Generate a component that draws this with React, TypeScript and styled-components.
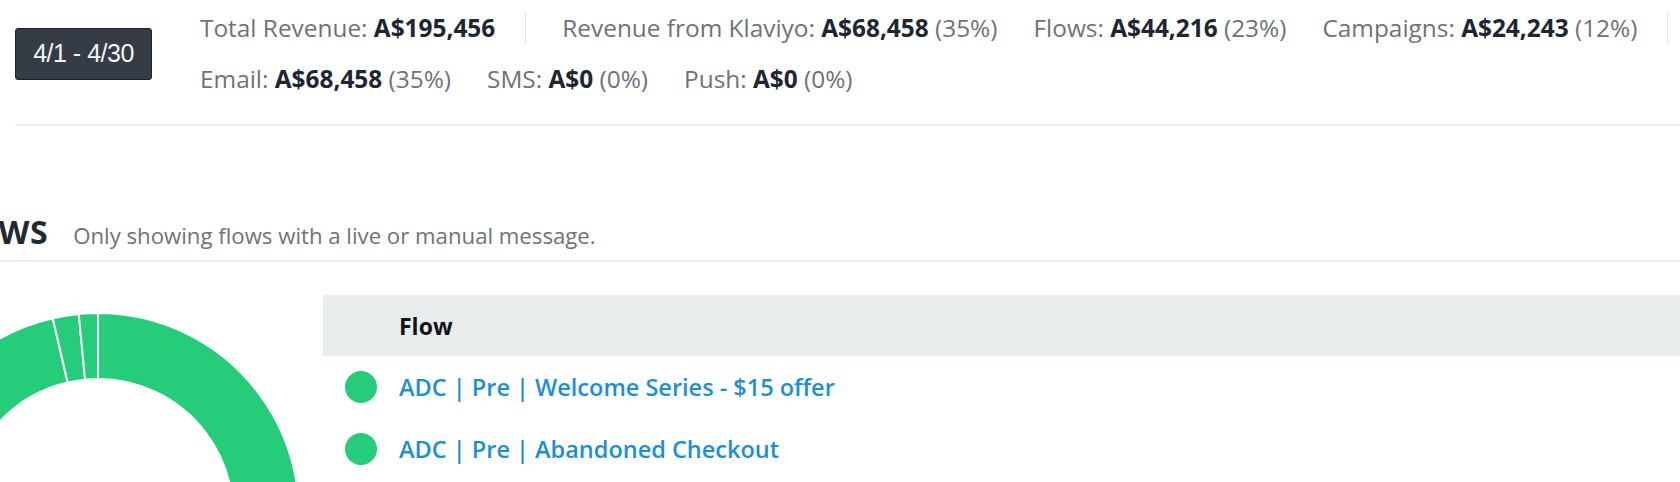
import React from "react";
import styled, { createGlobalStyle } from "styled-components";

const GlobalStyle = createGlobalStyle`
  html, body {
    margin: 0;
    padding: 0;
    background: #ffffff;
    overflow: hidden;
  }
  body {
    font-family: "Open Sans", "Noto Sans", sans-serif;
  }
`;

type StatItem = {
  label: string;
  value: string;
  pct?: string;
  sep?: boolean;
};

const topRow: StatItem[] = [
  { label: "Total Revenue:", value: "A$195,456", sep: true },
  { label: "Revenue from Klaviyo:", value: "A$68,458", pct: "(35%)" },
  { label: "Flows:", value: "A$44,216", pct: "(23%)" },
  { label: "Campaigns:", value: "A$24,243", pct: "(12%)", sep: true },
];

const bottomRow: StatItem[] = [
  { label: "Email:", value: "A$68,458", pct: "(35%)" },
  { label: "SMS:", value: "A$0", pct: "(0%)" },
  { label: "Push:", value: "A$0", pct: "(0%)" },
];

const flows = [
  "ADC | Pre | Welcome Series - $15 offer",
  "ADC | Pre | Abandoned Checkout",
];

// degrees, clockwise from 12 o'clock
const segments: [number, number][] = [
  [0, 212],
  [212, 347],
  [347, 354.5],
  [354.5, 360],
];

const point = (cx: number, cy: number, rad: number, deg: number) => {
  const a = (deg * Math.PI) / 180;
  return [cx + rad * Math.sin(a), cy - rad * Math.cos(a)];
};

const arcPath = (a0: number, a1: number) => {
  const cx = 201;
  const cy = 201;
  const R = 201;
  const r = 135;
  const large = a1 - a0 > 180 ? 1 : 0;
  const [x0, y0] = point(cx, cy, R, a0);
  const [x1, y1] = point(cx, cy, R, a1 - 0.001);
  const [x2, y2] = point(cx, cy, r, a1 - 0.001);
  const [x3, y3] = point(cx, cy, r, a0);
  return `M${x0} ${y0} A${R} ${R} 0 ${large} 1 ${x1} ${y1} L${x2} ${y2} A${r} ${r} 0 ${large} 0 ${x3} ${y3} Z`;
};

const Donut = () => (
  <svg width="402" height="402" viewBox="0 0 402 402">
    {segments.map(([a0, a1]) => (
      <path
        key={a0}
        d={arcPath(a0, a1)}
        fill="#25cc7a"
        stroke="#ffffff"
        strokeWidth="2"
      />
    ))}
  </svg>
);

const StatLine = ({ items }: { items: StatItem[] }) => (
  <StatRow>
    {items.map((it) => (
      <React.Fragment key={it.label}>
        <Stat>
          {it.label} <Value>{it.value}</Value>
          {it.pct ? ` ${it.pct}` : ""}
        </Stat>
        {it.sep && <Divider />}
      </React.Fragment>
    ))}
  </StatRow>
);

const App = () => {
  return (
    <Page>
      <GlobalStyle />
      <TopBar>
        <DateBadge>4/1 - 4/30</DateBadge>
        <Stats>
          <StatLine items={topRow} />
          <StatLine items={bottomRow} />
        </Stats>
      </TopBar>

      <FlowsSection>
        <FlowsHeader>
          <Title>Flows</Title>
          <Subtitle>Only showing flows with a live or manual message.</Subtitle>
        </FlowsHeader>
        <FlowsBody>
          <ChartCol>
            <Donut />
          </ChartCol>
          <Table>
            <TableHead>
              <span />
              <HeadCell>Flow</HeadCell>
            </TableHead>
            {flows.map((name) => (
              <Row key={name}>
                <StatusDot />
                <FlowLink href="#">{name}</FlowLink>
              </Row>
            ))}
          </Table>
        </FlowsBody>
      </FlowsSection>
    </Page>
  );
};

export default App;

const Page = styled.div`
  width: 1680px;
  height: 482px;
  overflow: hidden;
`;

const TopBar = styled.div`
  display: flex;
  align-items: center;
  gap: 48px;
  margin-left: 15px;
  padding: 12px 0 29px;
  border-bottom: 2px solid #edf0f1;
`;

const DateBadge = styled.div`
  flex: none;
  box-sizing: border-box;
  width: 137px;
  height: 52px;
  display: flex;
  align-items: center;
  justify-content: center;
  background: #353c46;
  border: 1px solid #1e2329;
  border-radius: 3px;
  color: #f2f4f5;
  font-family: "Liberation Sans", Arial, sans-serif;
  font-size: 25px;
  letter-spacing: -0.5px;
`;

const Stats = styled.div`
  display: flex;
  flex-direction: column;
  gap: 19px;
`;

const StatRow = styled.div`
  display: flex;
  align-items: center;
  height: 32px;
  white-space: nowrap;
`;

const Stat = styled.span`
  font-size: 24.4px;
  line-height: 32px;
  color: #6d7379;
  margin-right: 36px;
`;

const Value = styled.b`
  font-weight: 700;
  color: #1d2631;
`;

const Divider = styled.span`
  flex: none;
  width: 1px;
  height: 32px;
  background: #e1e4e6;
  margin: 0 36px 0 -6px;
`;

const FlowsSection = styled.section`
  margin-top: 86px;
`;

const FlowsHeader = styled.div`
  display: flex;
  align-items: baseline;
  line-height: 40px;
  margin-left: -64px;
  padding-bottom: 4px;
  border-bottom: 2px solid #eef1f1;
  white-space: nowrap;
`;

const Title = styled.h2`
  margin: 0;
  font-size: 32px;
  font-weight: 700;
  text-transform: uppercase;
  letter-spacing: 0.5px;
  color: #1f2a35;
`;

const Subtitle = styled.span`
  margin-left: 25px;
  font-size: 22.2px;
  color: #6d737a;
`;

const FlowsBody = styled.div`
  display: flex;
  align-items: flex-start;
`;

const ChartCol = styled.div`
  flex: none;
  width: 402px;
  margin-left: -103px;
  margin-top: 51px;
  line-height: 0;
`;

const Table = styled.div`
  flex: 1;
  min-width: 0;
  margin-left: 24px;
  margin-top: 33px;
`;

const TableHead = styled.div`
  display: grid;
  grid-template-columns: 76px 1fr;
  align-items: center;
  height: 61px;
  background: #e9eced;
`;

const HeadCell = styled.span`
  font-size: 23px;
  font-weight: 700;
  color: #111417;
`;

const Row = styled.div`
  display: grid;
  grid-template-columns: 76px 1fr;
  align-items: center;
  height: 62px;
`;

const StatusDot = styled.span`
  width: 32px;
  height: 32px;
  margin-left: 22px;
  border-radius: 50%;
  background: #25cc7a;
`;

const FlowLink = styled.a`
  font-size: 23.5px;
  font-weight: 600;
  color: #1d8fd5;
  text-decoration: none;
  white-space: nowrap;
`;
